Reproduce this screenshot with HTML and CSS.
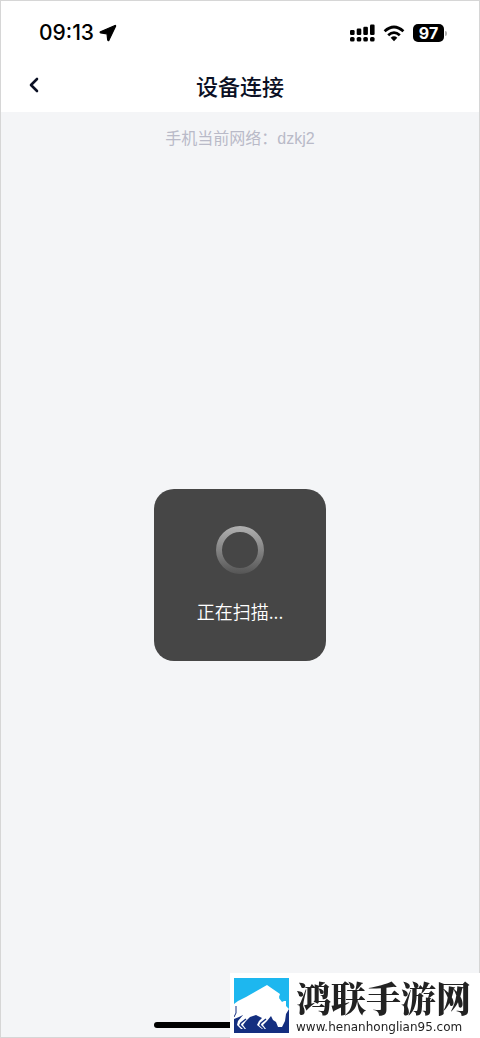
FILE: index.html
```html
<!DOCTYPE html>
<html lang="zh-CN">
<head>
<meta charset="utf-8">
<meta name="viewport" content="width=device-width, initial-scale=1">
<title>设备连接</title>
<link rel="stylesheet" href="styles.css">
</head>
<body>
<div class="screen">
  <div class="statusbar">
    <div class="status-left">
      <span class="time">09:13</span>
      <svg width="18" height="18" viewBox="0 0 18 18" aria-hidden="true"><path d="M16 1.500L1.500 7.800Q.6 8.500 1.700 9L8 9.800L8.700 16Q9.400 17.200 10 16.100L16.600 2.200Q16.800 1.200 16 1.500Z" stroke="#000" stroke-width="1.200" stroke-linejoin="round"/></svg>
    </div>
    <div class="status-right">
      <svg width="25" height="18" viewBox="0 0 25 18" aria-hidden="true">
        <rect x="0" y="6" width="4.600" height="5" rx="1.200"/><rect x="6.700" y="4.500" width="4.600" height="6.500" rx="1.200"/><rect x="13.300" y="2.700" width="4.600" height="8.300" rx="1.200"/><rect x="20" y="0.500" width="4.600" height="10.500" rx="1.200"/>
        <rect x="0" y="13" width="4.600" height="4.600" rx="1.600"/><rect x="6.700" y="13" width="4.600" height="4.600" rx="1.600"/><rect x="13.300" y="13" width="4.600" height="4.600" rx="1.600"/><rect x="20" y="13" width="4.600" height="4.600" rx="1.600"/>
      </svg>
      <svg width="22" height="17" viewBox="0 0 22 17" aria-hidden="true">
        <path d="M1.600 6.200Q11-2.200 20.400 6.200M5.200 10.200Q11 5 16.800 10.200" fill="none" stroke="#000" stroke-width="2.800"/>
        <path d="M7.700 12.700Q11 10 14.300 12.700L11 16.300Z"/>
      </svg>
      <div class="battery"><span class="level">97</span><span class="tip"></span></div>
    </div>
  </div>
  <header class="navbar">
    <button class="back" type="button" aria-label="返回">
      <svg width="10" height="16" viewBox="0 0 10 16" aria-hidden="true"><path d="M8 2L2 8L8 14" fill="none" stroke="#0b1024" stroke-width="2.600" stroke-linecap="round" stroke-linejoin="round"/></svg>
    </button>
    <h1 class="title">设备连接</h1>
  </header>
  <main class="content">
    <p class="network">手机当前网络：dzkj2</p>
    <div class="toast" role="status">
      <svg width="48" height="48" viewBox="0 0 48 48" aria-hidden="true">
        <defs><linearGradient id="ring" x1="0" y1="0" x2="0" y2="1"><stop offset="0" stop-color="#b2b2b2"/><stop offset="1" stop-color="#555"/></linearGradient></defs>
        <path fill="url(#ring)" fill-rule="evenodd" d="M24 0A24 24 0 1 1 24 48A24 24 0 1 1 24 0ZM24 6A18 18 0 1 0 24 42A18 18 0 1 0 24 6Z"/>
      </svg>
      <span class="toast-text">正在扫描...</span>
    </div>
  </main>
  <div class="home-indicator"></div>
</div>
<aside class="watermark">
  <svg width="55" height="55" viewBox="0 0 55 55" aria-hidden="true">
    <path fill="#1db7ef" d="M0 0H55V31H0Z"/>
    <path fill="#142f80" d="M0 31H55V55H0Z"/>
    <path fill="#fff" d="M0 26L4 23L12 19L33 7L46 16L45 19L48 23L52 23L52 28L55 31L52 36L51 43L48 49L44 49L42 44L39 42L37 38L33 43L29 47L32 51H28L23 47L25 43L28 40L22 37L16 39L12 43L9 47L12 51H7L3 47L4 43L9 37L5 39L0 41Z"/>
    <path fill="#1db7ef" d="M47 10Q51 13 50 18L52 17V22L48 24L45 20Q49 17 47 10Z"/>
    <path fill="none" stroke="#142f80" stroke-width="1" d="M2 28V35L0 39"/>
    <path fill="none" stroke="#142f80" stroke-width="1.500" d="M12 41L7 45L6 47L10 51M32 41L27 45L26 47L30 51"/>
  </svg>
  <div class="brand">
    <div class="brand-name">鸿联手游网</div>
    <div class="brand-url">www.henanhonglian95.com</div>
  </div>
</aside>
</body>
</html>
```
FILE: styles.css
```css
* { box-sizing: border-box; }
body {
  margin: 0;
  font-family: "Liberation Sans", "Noto Sans CJK SC", sans-serif;
  background: #f4f5f7;
}
svg { display: block; flex: none; }
.screen {
  min-height: 100vh;
  display: flex;
  flex-direction: column;
  border: 1px solid #d6d6d6;
}
.statusbar {
  display: flex;
  justify-content: space-between;
  align-items: center;
  height: 56px;
  padding: 8px 32px 0 38px;
  background: #fff;
}
.status-left { display: flex; align-items: center; gap: 5px; }
.time { font: 500 21px/24px Inter, sans-serif; color: #000; }
.status-right { display: flex; align-items: center; gap: 8px; }
.battery { display: flex; align-items: center; gap: 1px; }
.level {
  width: 31px;
  border-radius: 5px;
  background: #000;
  color: #fff;
  font: 700 16px/18px Inter, sans-serif;
  text-align: center;
}
.tip { width: 2px; height: 5px; border-radius: 0 2px 2px 0; background: #b0b0b0; }
.navbar {
  display: grid;
  grid-template-columns: 48px 1fr 48px;
  align-items: center;
  height: 55px;
  background: #fff;
}
.back {
  display: flex;
  justify-content: flex-end;
  padding: 8px 10px 8px 0;
  border: 0;
  background: none;
}
.title {
  margin: 0;
  color: #0b1024;
  font-size: 22px;
  font-weight: 500;
  line-height: 30px;
  text-align: center;
  font-family: "Noto Sans CJK SC", sans-serif;
}
.content {
  flex: 1;
  display: flex;
  flex-direction: column;
  align-items: center;
}
.network {
  margin: 15px 0 0;
  color: #b9bac8;
  font-size: 16px;
  line-height: 24px;
}
.toast {
  display: flex;
  flex-direction: column;
  align-items: center;
  gap: 24px;
  width: 172px;
  height: 172px;
  margin-top: 338px;
  padding-top: 37px;
  border-radius: 20px;
  background: #464646;
}
.toast-text { color: #fff; font: 350 18px/26px "Noto Sans CJK SC", sans-serif; }
.home-indicator {
  align-self: center;
  width: 172px;
  height: 6px;
  margin-bottom: 9px;
  border-radius: 3px;
  background: #000;
}
.watermark {
  position: fixed;
  right: 0;
  bottom: 0;
  display: flex;
  gap: 7px;
  width: 250px;
  height: 65px;
  padding: 5px 0 0 4px;
  background: #fff;
}
.brand-name {
  color: #222;
  font: 900 35px/38px "Noto Serif CJK SC", "Noto Sans CJK SC", serif;
  white-space: nowrap;
}
.brand-url { padding-top: 4px; color: #222; font: 12px/14px "DejaVu Sans", sans-serif; }
```
